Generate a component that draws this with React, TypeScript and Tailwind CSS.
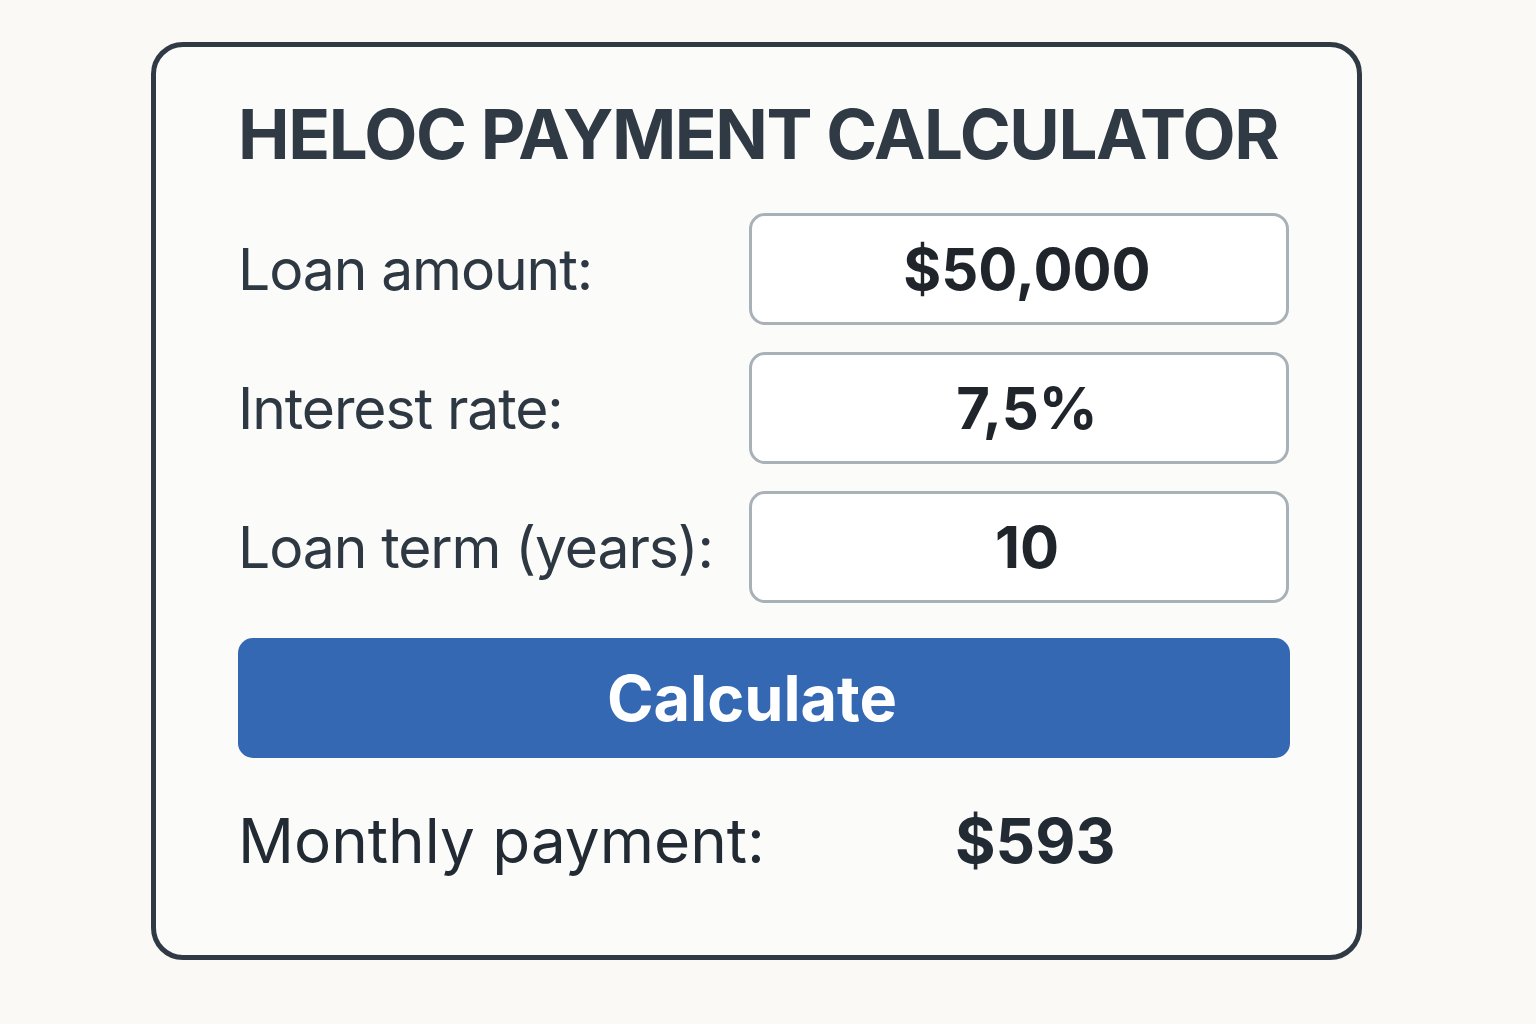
import React, { useState } from "react";

// 입력 필드 정의
interface Field {
    label: string;
    value: string;
}

const fields: Field[] = [
    { label: "Loan amount:", value: "$50,000" },
    { label: "Interest rate:", value: "7,5%" },
    { label: "Loan term (years):", value: "10" },
];

export default function App() {
    const [result] = useState("$593");

    return (
        <div className="w-full min-h-screen bg-[#faf9f5] pt-[42px] pl-[151px]" style={{ fontFamily: "Inter, 'Noto Sans', sans-serif" }}>
            <div className="w-[1211px] h-[918px] border-[5px] border-[#2f3a44] rounded-[32px] bg-[#fbfbf9] pt-[53px] pl-[82px] flex flex-col">
                <h1 className="text-[69px] leading-none font-bold text-[#2f3a45] tracking-[-1.4px]">HELOC PAYMENT CALCULATOR</h1>

                <div className="mt-[44px] flex flex-col gap-[27px] w-[1052px]">
                    {fields.map((field) => (
                        <div key={field.label} className="grid grid-cols-[511px_540px] items-center">
                            <span className="text-[57px] leading-none text-[#2e3842] tracking-[-1.1px]">{field.label}</span>
                            <div className="h-[112px] rounded-[16px] border-[3px] border-[#a9b1b8] bg-white flex items-center justify-center pl-4">
                                <span className="text-[58px] leading-none font-bold text-[#1f252b]">{field.value}</span>
                            </div>
                        </div>
                    ))}
                </div>

                <button className="mt-[35px] w-[1052px] h-[120px] rounded-[15px] bg-[#3468b3] text-white text-[63px] font-bold leading-none flex items-center justify-center pr-[24px]">
                    Calculate
                </button>

                <div className="mt-[52px] flex items-center text-[62px] leading-none text-[#222b33]">
                    <span className="w-[717px]">Monthly payment:</span>
                    <span className="font-bold">{result}</span>
                </div>
            </div>
        </div>
    );
}
